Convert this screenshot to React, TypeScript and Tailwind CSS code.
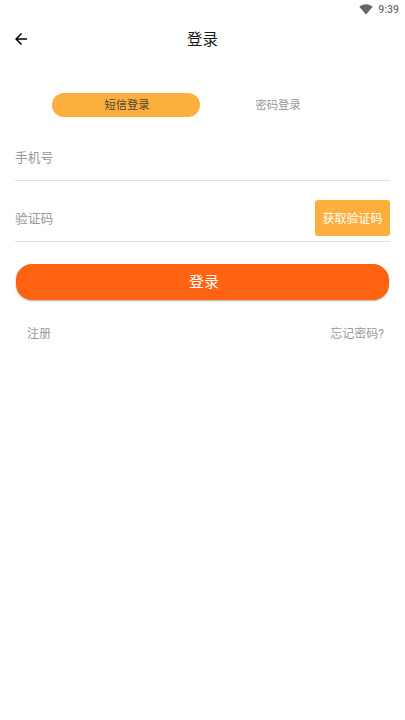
import { useState } from "react"
import { MdArrowBack } from "react-icons/md"
import clsx from "clsx"

const tabs = [
  { id: "sms", label: "短信登录" },
  { id: "password", label: "密码登录" },
]

function StatusBar() {
  return (
    <div className="flex h-[18px] items-center justify-end gap-[5px] pr-[6px]">
      <svg viewBox="0 0 14 11" className="h-[11px] w-[14px] fill-[#666666]">
        <path d="M7 10.6 0.3 2.7C2.2 1.2 4.5 0.3 7 0.3s4.8 0.9 6.7 2.4z" />
      </svg>
      <span className="pt-[2px] font-[Roboto] text-[10.5px] leading-none font-medium text-[#707070]">9:39</span>
    </div>
  )
}

function Header() {
  return (
    <header className="grid h-[42px] grid-cols-[1fr_auto_1fr] items-center px-3">
      <button aria-label="返回" className="w-[18px]">
        <MdArrowBack className="h-[18px] w-[18px] text-black" />
      </button>
      <h1 className="pt-[3px] text-[15.5px] leading-none text-[#1a1a1a]">登录</h1>
    </header>
  )
}

export default function App() {
  const [tab, setTab] = useState("sms")

  return (
    <div className="h-[720px] w-[405px] overflow-hidden bg-white font-['Roboto','Noto_Sans_CJK_SC',sans-serif]">
      <StatusBar />
      <Header />

      {/* Login mode */}
      <div className="mt-[33px] flex justify-between pr-[54px] pl-[52px]">
        {tabs.map((item) => (
          <button
            key={item.id}
            onClick={() => setTab(item.id)}
            className={clsx(
              "h-6 w-[148px] rounded-full pt-[2px] pl-[2px] text-[11.25px] leading-none",
              tab === item.id ? "bg-[#fcaf3c] text-[#4d4433]" : "text-[#999999]"
            )}
          >
            {item.label}
          </button>
        ))}
      </div>

      <form className="px-[15px]" onSubmit={(e) => e.preventDefault()}>
        <div className="mt-[18px] flex h-[46px] items-center border-b border-[#e0e0e0]">
          <input
            type="tel"
            placeholder="手机号"
            className="w-full pt-px text-[12.75px] outline-none placeholder:text-[#999999]"
          />
        </div>
        <div className="mt-[15px] flex h-[46px] items-center justify-between border-b border-[#e0e0e0]">
          <input
            type="text"
            placeholder="验证码"
            className="w-40 text-[12.75px] outline-none placeholder:text-[#999999]"
          />
          <button
            type="button"
            className="mb-px h-9 w-[75px] rounded-[3px] bg-[#fcaf3c] pt-px text-xs leading-none text-white"
          >
            获取验证码
          </button>
        </div>

        <button
          type="submit"
          className="mx-px mt-[22px] h-9 w-[373px] rounded-[16px] bg-[#ff6210] pt-px pl-[3px] text-[15px] leading-none text-white shadow-[0_1px_2px_rgba(0,0,0,0.3)]"
        >
          登录
        </button>
      </form>

      <div className="mt-[28px] flex justify-between pr-[21px] pl-[27px] text-xs leading-none text-[#999999]">
        <a>注册</a>
        <a>忘记密码?</a>
      </div>
    </div>
  )
}
